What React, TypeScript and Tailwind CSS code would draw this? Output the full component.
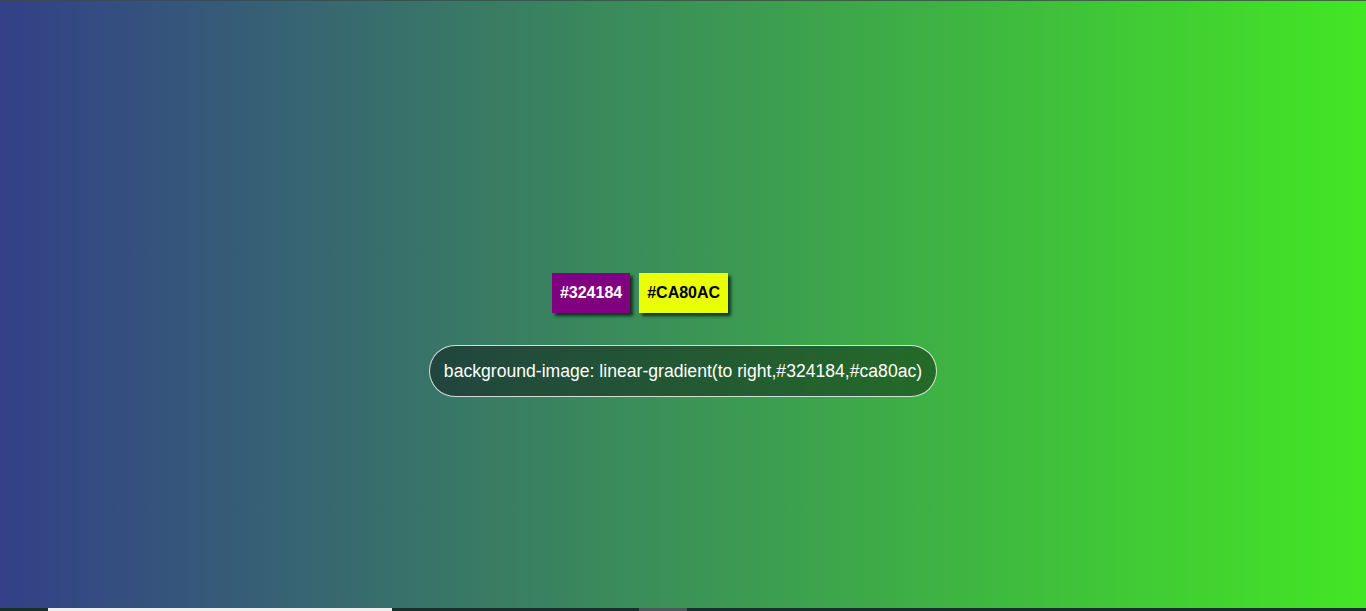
export default function App() {
  return (
    <div
      className="w-[1366px] h-[611px] flex flex-col overflow-hidden bg-[linear-gradient(to_right,#334088,#43e624)]"
      style={{ fontFamily: '"Liberation Sans", Arial, sans-serif' }}
    >
      {/* top hairline */}
      <div className="h-px bg-[#3d4a48]/80" />

      <div className="flex-1 flex flex-col items-center pt-[272px]">
        <div className="flex gap-[9px] mr-[86px]">
          <div className="h-10 px-2 flex items-center bg-[#800080] text-white text-base font-bold shadow-[3px_3px_3px_rgba(0,0,0,0.65)]">
            #324184
          </div>
          <div className="h-10 px-2 flex items-center bg-[#e9ff05] text-black text-base font-bold shadow-[3px_3px_3px_rgba(0,0,0,0.65)]">
            #CA80AC
          </div>
        </div>

        <div className="mt-8 h-[52px] px-[14px] flex items-center rounded-full border border-white/80 bg-black/40 text-white text-[17.6px]">
          background-image: linear-gradient(to right,#324184,#ca80ac)
        </div>
      </div>

      {/* bottom scroll strip */}
      <div className="h-[3px] bg-[#17302b] flex">
        <div className="w-12" />
        <div className="w-[344px] bg-[#eef0f0]" />
        <div className="w-[247px]" />
        <div className="w-12 bg-[#4a5a58]" />
      </div>
    </div>
  );
}
